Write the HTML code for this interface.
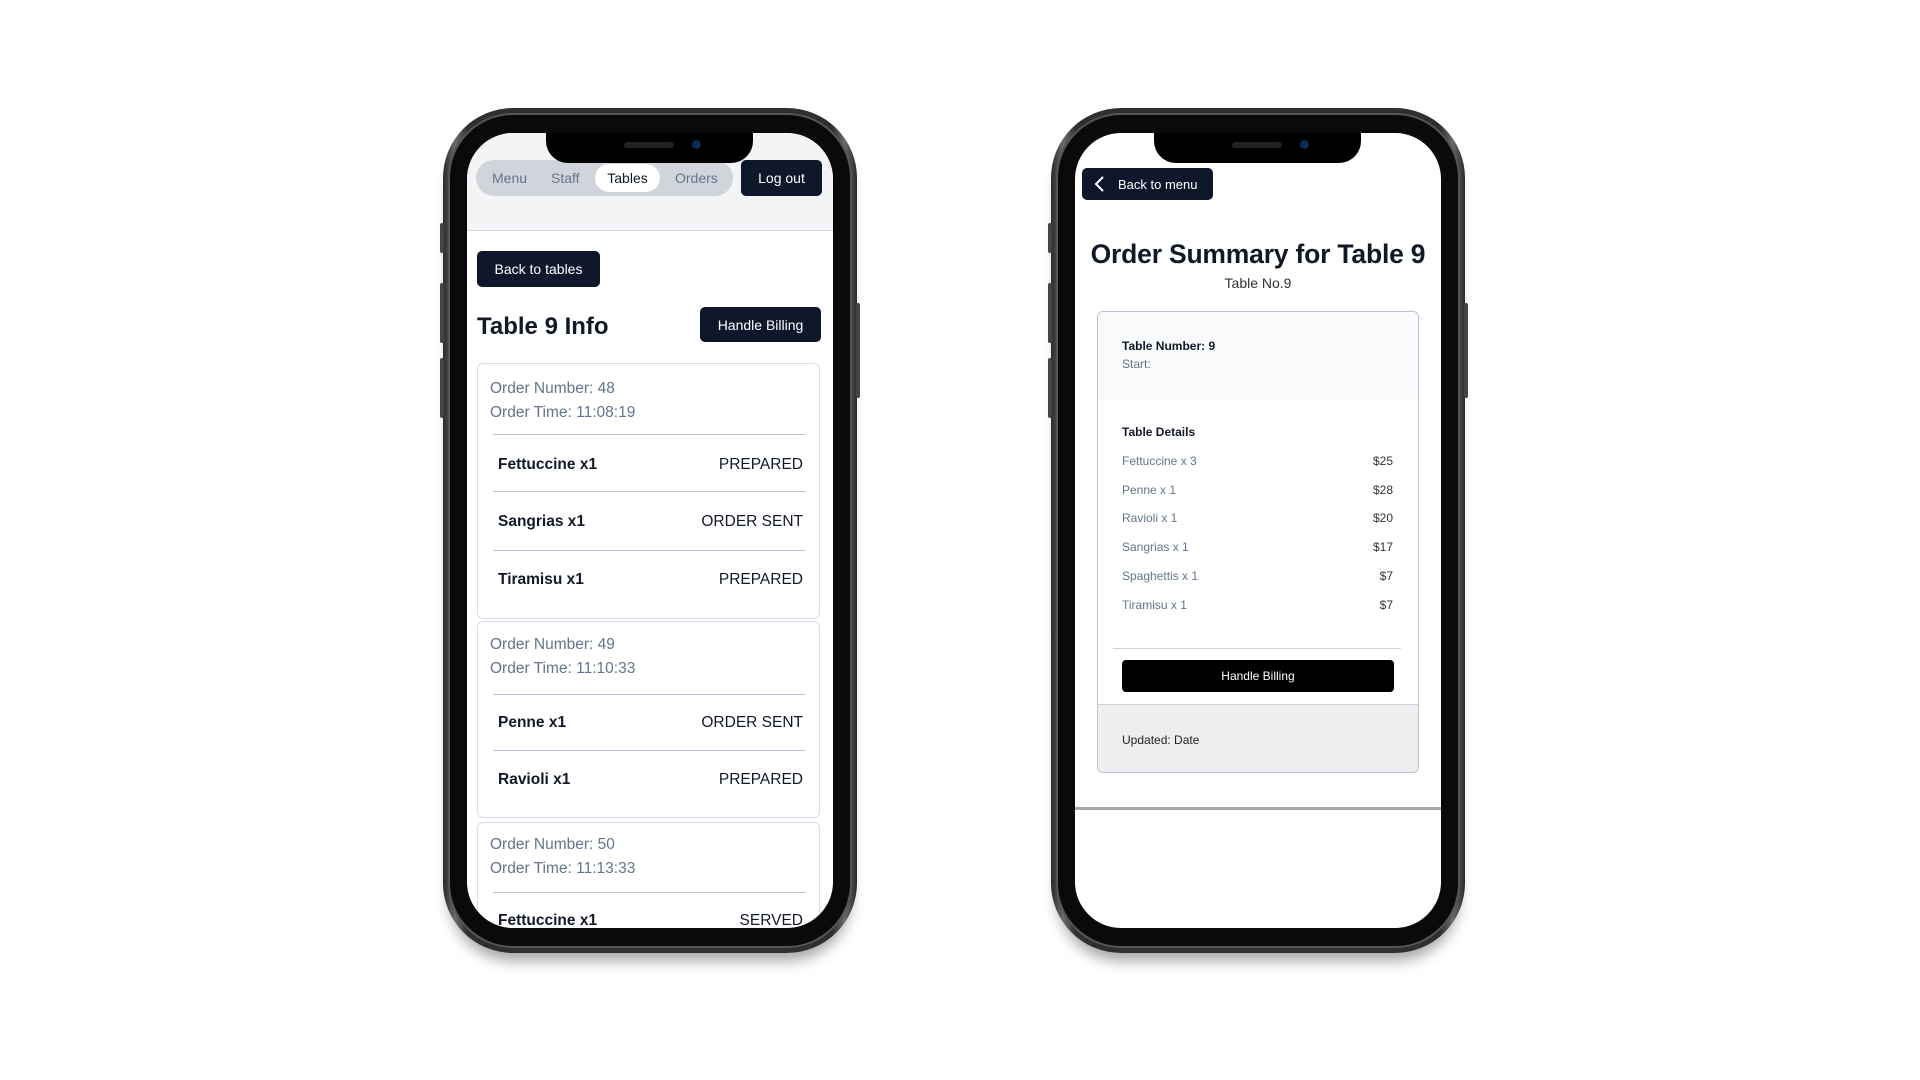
<!DOCTYPE html>
<html><head><meta charset="utf-8"><style>
*{box-sizing:border-box;margin:0;padding:0}
body{width:1920px;height:1080px;background:#fff;position:relative;overflow:hidden;font-family:"Liberation Sans",sans-serif;color:#111827}
.phone{position:absolute;top:108px;width:414px;height:845px;border-radius:70px;background:linear-gradient(90deg,#2a2a2a,#6a6a6a 3%,#2f2f2f 6%,#2f2f2f 94%,#6a6a6a 97%,#2a2a2a);box-shadow:0 14px 14px -6px rgba(0,0,0,.35)}
.phone:before{content:"";position:absolute;inset:5px;border-radius:65px;background:#0a0a0a;border:2px solid #555}
.screen{position:absolute;left:24px;top:25px;width:366px;height:795px;border-radius:46px;overflow:hidden;background:#fff}
.notch{position:absolute;left:79px;top:0;width:207px;height:30px;background:#000;border-radius:0 0 22px 22px;z-index:5}
.notch:before{content:"";position:absolute;left:78px;top:9px;width:50px;height:6px;border-radius:3px;background:#222}
.notch:after{content:"";position:absolute;left:146px;top:7px;width:9px;height:9px;border-radius:50%;background:#0b2a5a}
.btnside{position:absolute;width:4px;background:#444;border-radius:2px}
.a{position:absolute;white-space:nowrap}
.dark{background:#0f172a;color:#fff;border-radius:5px;font-size:14px;display:flex;align-items:center;justify-content:center}
.slate{color:#64748b}
.hr{position:absolute;height:1px;background:#b8c4d6}
</style></head><body>

<div class="phone" style="left:443px">
 <div class="btnside" style="left:-3px;top:115px;height:30px"></div>
 <div class="btnside" style="left:-3px;top:175px;height:60px"></div>
 <div class="btnside" style="left:-3px;top:250px;height:60px"></div>
 <div class="btnside" style="right:-3px;top:195px;height:95px"></div>
 <div class="screen">
  <div class="notch"></div>
  <div class="a" style="left:0;top:0;width:366px;height:98px;background:#f3f4f6;border-bottom:1px solid #d1d8e2"></div>
  <div class="a" style="left:9px;top:27px;width:257px;height:36px;border-radius:18px;background:#d1d5db"></div>
  <div class="a slate" style="left:25px;top:37px;font-size:14px">Menu</div>
  <div class="a slate" style="left:84px;top:37px;font-size:14px">Staff</div>
  <div class="a" style="left:128px;top:31px;width:65px;height:28px;border-radius:14px;background:#fff;font-size:14px;text-align:center;line-height:28px">Tables</div>
  <div class="a slate" style="left:208px;top:37px;font-size:14px">Orders</div>
  <div class="a dark" style="left:274px;top:27px;width:81px;height:36px">Log out</div>
  <div class="a dark" style="left:10px;top:118px;width:123px;height:36px">Back to tables</div>
  <div class="a" style="left:10px;top:180px;font-size:24px;font-weight:bold">Table 9 Info</div>
  <div class="a dark" style="left:233px;top:174px;width:121px;height:35px">Handle Billing</div>

  <div class="a" style="left:10px;top:230px;width:343px;height:256px;border:1px solid #d7dee8;border-radius:6px"></div>
  <div class="a slate" style="left:23px;top:247px;font-size:15.5px">Order Number: 48</div>
  <div class="a slate" style="left:23px;top:271px;font-size:15.5px">Order Time: 11:08:19</div>
  <div class="hr" style="left:26px;top:301px;width:312px"></div>
  <div class="a" style="left:31px;top:323px;font-size:15.5px;font-weight:bold">Fettuccine x1</div>
  <div class="a" style="right:30px;top:323px;font-size:15.5px">PREPARED</div>
  <div class="hr" style="left:26px;top:358px;width:312px"></div>
  <div class="a" style="left:31px;top:380px;font-size:15.5px;font-weight:bold">Sangrias x1</div>
  <div class="a" style="right:30px;top:380px;font-size:15.5px">ORDER SENT</div>
  <div class="hr" style="left:26px;top:417px;width:312px"></div>
  <div class="a" style="left:31px;top:438px;font-size:15.5px;font-weight:bold">Tiramisu x1</div>
  <div class="a" style="right:30px;top:438px;font-size:15.5px">PREPARED</div>

  <div class="a" style="left:10px;top:488px;width:343px;height:197px;border:1px solid #d7dee8;border-radius:6px"></div>
  <div class="a slate" style="left:23px;top:503px;font-size:15.5px">Order Number: 49</div>
  <div class="a slate" style="left:23px;top:527px;font-size:15.5px">Order Time: 11:10:33</div>
  <div class="hr" style="left:26px;top:561px;width:312px"></div>
  <div class="a" style="left:31px;top:581px;font-size:15.5px;font-weight:bold">Penne x1</div>
  <div class="a" style="right:30px;top:581px;font-size:15.5px">ORDER SENT</div>
  <div class="hr" style="left:26px;top:617px;width:312px"></div>
  <div class="a" style="left:31px;top:638px;font-size:15.5px;font-weight:bold">Ravioli x1</div>
  <div class="a" style="right:30px;top:638px;font-size:15.5px">PREPARED</div>

  <div class="a" style="left:10px;top:689px;width:343px;height:200px;border:1px solid #d7dee8;border-radius:6px"></div>
  <div class="a slate" style="left:23px;top:703px;font-size:15.5px">Order Number: 50</div>
  <div class="a slate" style="left:23px;top:727px;font-size:15.5px">Order Time: 11:13:33</div>
  <div class="hr" style="left:26px;top:759px;width:312px"></div>
  <div class="a" style="left:31px;top:779px;font-size:15.5px;font-weight:bold">Fettuccine x1</div>
  <div class="a" style="right:30px;top:779px;font-size:15.5px">SERVED</div>
 </div>
</div>

<div class="phone" style="left:1051px">
 <div class="btnside" style="left:-3px;top:115px;height:30px"></div>
 <div class="btnside" style="left:-3px;top:175px;height:60px"></div>
 <div class="btnside" style="left:-3px;top:250px;height:60px"></div>
 <div class="btnside" style="right:-3px;top:195px;height:95px"></div>
 <div class="screen">
  <div class="notch"></div>
  <div class="a dark" style="left:7px;top:35px;width:131px;height:32px;font-size:13px;justify-content:flex-start;padding-left:36px">
   <svg style="position:absolute;left:12px;top:8px" width="12" height="16" viewBox="0 0 12 16"><path d="M9 1 L2 8 L9 15" fill="none" stroke="#fff" stroke-width="2"/></svg>Back to menu</div>
  <div class="a" style="left:0;width:366px;text-align:center;top:106px;font-size:26.5px;font-weight:bold;letter-spacing:-0.2px">Order Summary for Table 9</div>
  <div class="a" style="left:0;width:366px;text-align:center;top:142px;font-size:14px;color:#333">Table No.9</div>
  <div class="a" style="left:22px;top:178px;width:322px;height:462px;border:1px solid #b8c4d6;border-radius:6px;overflow:hidden">
   <div class="a" style="left:0;top:0;width:100%;height:87px;background:#f8fafc"></div>
   <div class="a" style="left:0;top:392px;width:100%;height:70px;background:#eeeeee;border-top:1px solid #c9d2de"></div>
  </div>
  <div class="a" style="left:47px;top:206px;font-size:12px;font-weight:bold">Table Number: 9</div>
  <div class="a slate" style="left:47px;top:224px;font-size:12px">Start:</div>
  <div class="a" style="left:47px;top:292px;font-size:12px;font-weight:bold">Table Details</div>
  <div class="a slate" style="left:47px;top:321px;font-size:12px">Fettuccine x 3</div><div class="a" style="right:48px;top:321px;font-size:12px;color:#333">$25</div>
  <div class="a slate" style="left:47px;top:350px;font-size:12px">Penne x 1</div><div class="a" style="right:48px;top:350px;font-size:12px;color:#333">$28</div>
  <div class="a slate" style="left:47px;top:378px;font-size:12px">Ravioli x 1</div><div class="a" style="right:48px;top:378px;font-size:12px;color:#333">$20</div>
  <div class="a slate" style="left:47px;top:407px;font-size:12px">Sangrias x 1</div><div class="a" style="right:48px;top:407px;font-size:12px;color:#333">$17</div>
  <div class="a slate" style="left:47px;top:436px;font-size:12px">Spaghettis x 1</div><div class="a" style="right:48px;top:436px;font-size:12px;color:#333">$7</div>
  <div class="a slate" style="left:47px;top:465px;font-size:12px">Tiramisu x 1</div><div class="a" style="right:48px;top:465px;font-size:12px;color:#333">$7</div>
  <div class="hr" style="left:38px;top:515px;width:288px;background:#c9d2de"></div>
  <div class="a" style="left:47px;top:527px;width:272px;height:32px;background:#000;color:#fff;border-radius:4px;font-size:12px;text-align:center;line-height:32px">Handle Billing</div>
  <div class="a" style="left:47px;top:600px;font-size:12px;color:#222">Updated: Date</div>
  <div class="a" style="left:0;top:674px;width:366px;height:3px;background:#a8a8a8"></div>
 </div>
</div>
</body></html>
